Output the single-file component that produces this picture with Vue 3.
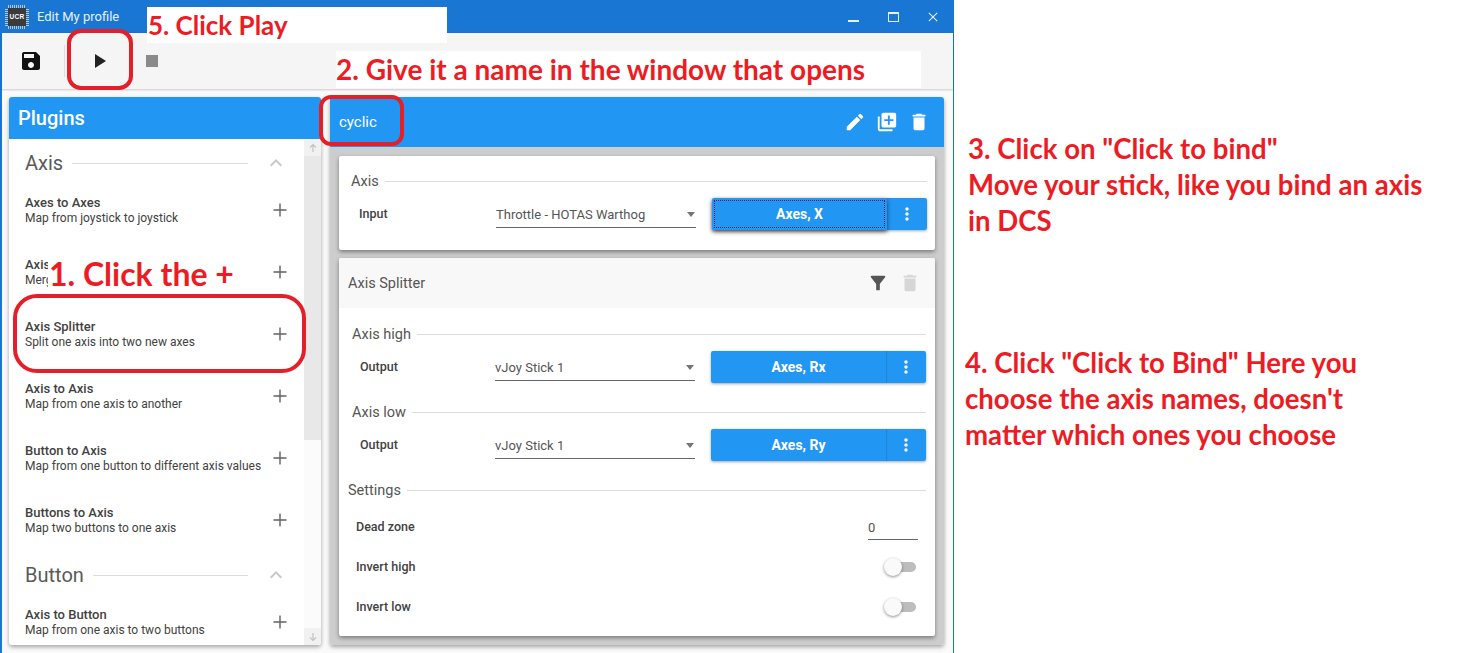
<script setup>
const icons = {
  save: 'M17 3H5c-1.11 0-2 .9-2 2v14c0 1.1.89 2 2 2h14c1.1 0 2-.9 2-2V7l-4-4zm-5 16c-1.66 0-3-1.34-3-3s1.34-3 3-3 3 1.34 3 3-1.34 3-3 3zm3-10H5V5h10v4z',
  play: 'M8 5v14l11-7z',
  stop: 'M6 6h12v12H6z',
  edit: 'M3 17.25V21h3.75L17.81 9.94l-3.75-3.75L3 17.25zM20.71 7.04c.39-.39.39-1.02 0-1.41l-2.34-2.34c-.39-.39-1.02-.39-1.41 0l-1.83 1.83 3.75 3.75 1.83-1.83z',
  copy: 'M4 6H2v14c0 1.1.9 2 2 2h14v-2H4V6zm16-4H8c-1.1 0-2 .9-2 2v12c0 1.1.9 2 2 2h12c1.1 0 2-.9 2-2V4c0-1.1-.9-2-2-2zm-1 9h-4v4h-2v-4H9V9h4V5h2v4h4v2z',
  trash: 'M6 19c0 1.1.9 2 2 2h8c1.1 0 2-.9 2-2V7H6v12zM19 4h-3.5l-1-1h-5l-1 1H5v2h14V4z',
  filter: 'M4.25 5.61C6.27 8.2 10 13 10 13v6c0 .55.45 1 1 1h2c.55 0 1-.45 1-1v-6s3.72-4.8 5.74-7.39c.51-.66.04-1.61-.79-1.61H5.04c-.83 0-1.3.95-.79 1.61z',
  more: 'M12 8c1.1 0 2-.9 2-2s-.9-2-2-2-2 .9-2 2 .9 2 2 2zm0 2c-1.1 0-2 .9-2 2s.9 2 2 2 2-.9 2-2-.9-2-2-2zm0 6c-1.1 0-2 .9-2 2s.9 2 2 2 2-.9 2-2-.9-2-2-2z',
  chevron: 'M12 8l-6 6 1.41 1.41L12 10.83l4.59 4.58L18 14z'
}
const axisPlugins = [
  ['Axes to Axes', 'Map from joystick to joystick'],
  ['Axis Merger', 'Merge two axes into one'],
  ['Axis Splitter', 'Split one axis into two new axes'],
  ['Axis to Axis', 'Map from one axis to another'],
  ['Button to Axis', 'Map from one button to different axis values'],
  ['Buttons to Axis', 'Map two buttons to one axis']
]
const buttonPlugins = [['Axis to Button', 'Map from one axis to two buttons']]
const pluginGroups = [
  { name: 'Axis', items: axisPlugins },
  { name: 'Button', items: buttonPlugins }
]
const outputs = [
  { name: 'Axis high', binding: 'Axes, Rx' },
  { name: 'Axis low', binding: 'Axes, Ry' }
]
</script>

<template>
  <div class="page">
    <div class="window">
      <header class="titlebar">
        <div class="logo">
          <div class="pins"></div>
          <div class="chip">UCR</div>
        </div>
        <span class="title">Edit My profile</span>
        <div class="winctl">
          <span class="minimize"></span>
          <span class="maximize"></span>
          <svg class="close" viewBox="0 0 12 12"><path d="M1 1l10 10M11 1L1 11" /></svg>
        </div>
      </header>

      <div class="toolbar">
        <button class="tool save"><svg viewBox="0 0 24 24"><path :d="icons.save" /></svg></button>
        <span class="divider"></span>
        <button class="tool play"><svg viewBox="0 0 24 24"><path :d="icons.play" /></svg></button>
        <button class="tool stop"><svg viewBox="0 0 24 24"><path :d="icons.stop" /></svg></button>
      </div>

      <main class="main">
        <section class="plugins">
          <h2 class="plugins-head">Plugins</h2>
          <div class="plugins-body">
            <div class="list">
              <template v-for="group in pluginGroups" :key="group.name">
                <div class="group-head">
                  <span class="group-name">{{ group.name }}</span>
                  <span class="rule"></span>
                  <svg class="chev" viewBox="0 0 24 24"><path :d="icons.chevron" /></svg>
                </div>
                <div v-for="p in group.items" :key="p[0]" class="plugin">
                  <div class="plugin-text">
                    <div class="plugin-name">{{ p[0] }}</div>
                    <div class="plugin-desc">{{ p[1] }}</div>
                  </div>
                  <svg class="plus" viewBox="0 0 14 14"><path d="M7 0.5v13M0.5 7h13" /></svg>
                </div>
              </template>
            </div>
            <div class="scrollbar">
              <div class="sb-btn"><svg viewBox="0 0 10 10"><path d="M5 9V1.5M2 4.5l3-3 3 3" /></svg></div>
              <div class="sb-thumb"></div>
              <div class="sb-track"></div>
              <div class="sb-btn"><svg viewBox="0 0 10 10"><path d="M5 1v7.5M2 5.5l3 3 3-3" /></svg></div>
            </div>
          </div>
        </section>

        <section class="profile">
          <header class="profile-head">
            <span class="profile-name">cyclic</span>
            <div class="head-icons">
              <svg viewBox="0 0 24 24"><path :d="icons.edit" /></svg>
              <svg viewBox="0 0 24 24"><path :d="icons.copy" /></svg>
              <svg viewBox="0 0 24 24"><path :d="icons.trash" /></svg>
            </div>
          </header>
          <div class="profile-body">
            <div class="card card-input">
              <div class="heading"><span>Axis</span><i></i></div>
              <div class="io-row">
                <span class="io-label">Input</span>
                <div class="select"><span>Throttle - HOTAS Warthog</span><b></b></div>
                <div class="bind">
                  <button class="bind-main focused">Axes, X</button>
                  <button class="bind-more"><svg viewBox="0 0 24 24"><path :d="icons.more" /></svg></button>
                </div>
              </div>
            </div>

            <div class="card">
              <div class="card-head">
                <span>Axis Splitter</span>
                <div class="card-icons">
                  <svg viewBox="0 0 24 24"><path :d="icons.filter" /></svg>
                  <svg class="dim" viewBox="0 0 24 24"><path :d="icons.trash" /></svg>
                </div>
              </div>
              <div class="card-body">
                <div v-for="o in outputs" :key="o.name" class="output">
                  <div class="heading"><span>{{ o.name }}</span><i></i></div>
                  <div class="io-row">
                    <span class="io-label">Output</span>
                    <div class="select"><span>vJoy Stick 1</span><b></b></div>
                    <div class="bind">
                      <button class="bind-main">{{ o.binding }}</button>
                      <button class="bind-more"><svg viewBox="0 0 24 24"><path :d="icons.more" /></svg></button>
                    </div>
                  </div>
                </div>
                <div class="settings">
                  <div class="heading"><span>Settings</span><i></i></div>
                  <div class="set-row">
                    <span class="io-label">Dead zone</span>
                    <div class="number">0</div>
                  </div>
                  <div class="set-row">
                    <span class="io-label">Invert high</span>
                    <div class="switch"><span class="thumb"></span></div>
                  </div>
                  <div class="set-row">
                    <span class="io-label">Invert low</span>
                    <div class="switch"><span class="thumb"></span></div>
                  </div>
                </div>
              </div>
            </div>
          </div>
        </section>
      </main>
    </div>

    <aside class="notes">
      <p class="note note-3">3. Click on "Click to bind"<br />Move your stick, like you bind an axis<br />in DCS</p>
      <p class="note note-4">4. Click "Click to Bind" Here you<br />choose the axis names, doesn't<br />matter which ones you choose</p>
    </aside>

    <div class="tag tag-5">5. Click Play</div>
    <div class="tag tag-2">2. Give it a name in the window that opens</div>
    <div class="tag tag-1">1. Click the +</div>
    <div class="ring ring-play"></div>
    <div class="ring ring-name"></div>
    <div class="ring ring-splitter"></div>
  </div>
</template>

<style>
html, body { margin: 0; background: #fff; }
</style>

<style scoped>
.page {
  position: relative;
  display: flex;
  width: 1472px;
  height: 653px;
  overflow: hidden;
  background: #fff;
  font-family: Roboto, "Liberation Sans", sans-serif;
  color: #424242;
}
.window {
  width: 954px;
  height: 653px;
  box-sizing: border-box;
  border-left: 2px solid #1976d2;
  border-right: 1px solid #1976d2;
  display: flex;
  flex-direction: column;
  flex: none;
  background: #fafafa;
}
.titlebar {
  height: 33px;
  flex: none;
  background: #1976d2;
  display: flex;
  align-items: center;
  margin-left: -2px;
  margin-right: -1px;
  color: #e3f2fd;
}
.logo {
  position: relative;
  width: 24px;
  height: 24px;
  margin-left: 5px;
  margin-right: 8px;
}
.pins {
  position: absolute;
  inset: 0;
  background:
    repeating-linear-gradient(90deg, #b9c6cf 0 1px, transparent 1px 2px) 3px 0 / 18px 24px no-repeat,
    repeating-linear-gradient(0deg, #b9c6cf 0 1px, transparent 1px 2px) 0 3px / 24px 18px no-repeat;
}
.chip {
  position: absolute;
  left: 3px;
  top: 3px;
  width: 18px;
  height: 18px;
  background: #3a3b3d;
  color: #fff;
  font: 700 6.5px/18px "Liberation Sans", sans-serif;
  text-align: center;
  letter-spacing: 0.3px;
}
.title { font-size: 13px; }
.winctl {
  margin-left: auto;
  width: 120px;
  height: 33px;
  display: flex;
  align-items: center;
  position: relative;
}
.minimize { position: absolute; left: 14px; top: 20px; width: 11px; height: 2px; background: #e3f2fd; }
.maximize { position: absolute; left: 54px; top: 12px; width: 11px; height: 10px; box-sizing: border-box; border: 1.4px solid #e3f2fd; border-top-width: 2px; }
.close { position: absolute; left: 94px; top: 12px; width: 10px; height: 10px; }
.close path { stroke: #e3f2fd; stroke-width: 1.3; fill: none; }

.toolbar {
  height: 56px;
  flex: none;
  background: #f5f5f5;
  display: flex;
  align-items: center;
  box-shadow: 0 1px 2px rgba(0, 0, 0, 0.2);
  position: relative;
}
.tool { border: 0; background: none; padding: 0; width: 24px; height: 24px; display: block; }
.tool svg { display: block; width: 24px; height: 24px; }
.save { margin-left: 17px; }
.save svg { fill: #111; }
.divider { width: 1px; height: 32px; background: #ddd; margin-left: 21px; }
.play { margin-left: 22px; }
.play svg { fill: #222; }
.stop { margin-left: 29px; }
.stop svg { fill: #8a8a8a; }

.main {
  flex: 1;
  min-height: 0;
  display: flex;
  gap: 9px;
  padding: 8px 0 8px 7px;
}
.plugins {
  width: 312px;
  height: 548px;
  flex: none;
  background: #fff;
  border-radius: 3px;
  box-shadow: 0 2px 4px rgba(0, 0, 0, 0.35);
  display: flex;
  flex-direction: column;
  overflow: hidden;
}
.plugins-head {
  margin: 0;
  height: 42px;
  flex: none;
  background: #2196f3;
  color: #fff;
  font-size: 20px;
  font-weight: 500;
  line-height: 42px;
  padding-left: 9px;
}
.plugins-body { flex: 1; min-height: 0; display: flex; }
.list { flex: 1; min-width: 0; overflow: hidden; }
.group-head {
  height: 40px;
  box-sizing: border-box;
  padding: 12px 16px 0 16px;
  display: flex;
  align-items: flex-start;
}
.group-name { font-size: 20px; line-height: 24px; color: #5a5a5a; }
.rule { flex: 1; height: 1px; background: #ddd; margin: 12px 0 0 9px; }
.chev { width: 24px; height: 24px; margin-left: 16px; fill: #c8c8c8; flex: none; }
.plugin {
  height: 62px;
  display: flex;
  align-items: center;
  padding: 0 17px 0 16px;
}
.plugin-text { flex: 1; min-width: 0; }
.plugin-name { font-size: 13px; font-weight: 500; line-height: 16px; color: #424242; white-space: nowrap; }
.plugin-desc { font-size: 12px; line-height: 15px; color: #424242; white-space: nowrap; }
.plus { width: 14px; height: 14px; flex: none; }
.plus path { stroke: #616161; stroke-width: 1.4; fill: none; }
.scrollbar { width: 17px; flex: none; display: flex; flex-direction: column; background: #fbfbfb; }
.sb-btn { height: 17px; flex: none; background: #f1f1f1; display: flex; align-items: center; justify-content: center; }
.sb-btn svg { width: 10px; height: 10px; }
.sb-btn path { stroke: #c4c4c4; stroke-width: 1.2; fill: none; }
.sb-thumb { height: 284px; flex: none; background: #e8e8e8; }
.sb-track { flex: 1; }

.profile {
  width: 614px;
  height: 548px;
  flex: none;
  display: flex;
  flex-direction: column;
  border-radius: 3px;
  box-shadow: 0 2px 4px rgba(0, 0, 0, 0.35);
  overflow: hidden;
}
.profile-head {
  height: 50px;
  flex: none;
  background: #2196f3;
  display: flex;
  align-items: center;
  color: #fff;
  padding: 0 14px 0 9px;
}
.profile-name { font-size: 15px; }
.head-icons { margin-left: auto; display: flex; gap: 10px; }
.head-icons svg { width: 22px; height: 22px; fill: #fff; display: block; }
.profile-body {
  flex: 1;
  background: #cdcdcd;
  padding: 9px;
  display: flex;
  flex-direction: column;
  gap: 8px;
}
.card {
  background: #fff;
  border-radius: 2px;
  box-shadow: 0 2px 4px rgba(0, 0, 0, 0.4);
}
.card-input { padding: 15px 8px 20px 12px; }
.heading { display: flex; align-items: center; height: 20px; }
.heading span { font-size: 14.5px; color: #555; font-weight: 400; }
.heading i { flex: 1; height: 1px; background: #dcdcdc; margin-left: 6px; }
.io-row { display: flex; align-items: center; height: 32px; margin-top: 7px; }
.io-label { font-size: 12.5px; font-weight: 500; color: #424242; margin-top: -2px; }
.io-row .io-label { padding-left: 8px; width: 137px; box-sizing: border-box; flex: none; width: 145px; }
.select {
  width: 200px;
  height: 27px;
  margin-top: 1px;
  box-sizing: border-box;
  border-bottom: 1px solid #666;
  display: flex;
  align-items: center;
  justify-content: space-between;
  font-size: 13px;
  color: #555;
}
.select b { border: 4px solid transparent; border-top: 5px solid #757575; border-bottom: 0; margin-right: 1px; }
.bind { margin-left: 16px; display: flex; height: 32px; border-radius: 2px; box-shadow: 0 1px 3px rgba(0, 0, 0, 0.35); }
.bind-main {
  width: 175px;
  border: 0;
  background: #2196f3;
  color: #fff;
  font: 700 14px Roboto, sans-serif;
  border-radius: 2px 0 0 2px;
  box-shadow: 1px 0 1px rgba(0, 0, 0, 0.12);
  padding: 0;
  position: relative;
}
.bind-main.focused {
  outline: 1px dotted #0d2f57;
  outline-offset: -3px;
  box-shadow: 0 2px 4px rgba(0, 0, 0, 0.6);
}
.bind-more {
  width: 40px;
  border: 0;
  padding: 0;
  background: #2196f3;
  border-radius: 0 2px 2px 0;
  display: flex;
  align-items: center;
  justify-content: center;
}
.bind-more svg { width: 20px; height: 20px; fill: #fff; }
.card-head {
  height: 50px;
  background: #f8f8f8;
  display: flex;
  align-items: center;
  padding: 0 14px 0 9px;
  font-size: 14.5px;
  color: #555;
  border-radius: 2px 2px 0 0;
}
.card-icons { margin-left: auto; display: flex; gap: 10px; }
.card-icons svg { width: 22px; height: 22px; fill: #555; display: block; }
.card-icons svg.dim { fill: #d6d6d6; }
.card-body { padding: 16px 9px 9px 9px; }
.output { padding-left: 4px; margin-bottom: 19px; }
.output .io-row .io-label { width: 143px; }
.settings .heading { margin-bottom: 7px; }
.set-row { height: 40px; display: flex; align-items: center; justify-content: space-between; padding: 0 10px 0 8px; }
.number {
  width: 50px;
  height: 25px;
  box-sizing: border-box;
  border-bottom: 1px solid #666;
  font-size: 13px;
  line-height: 25px;
  color: #555;
  margin: 1px -2px 0 0;
}
.switch { position: relative; width: 32px; height: 20px; }
.switch::before {
  content: "";
  position: absolute;
  left: 8px;
  right: 0;
  top: 5px;
  height: 10px;
  border-radius: 5px;
  background: #bdbdbd;
}
.thumb {
  position: absolute;
  left: 0;
  top: 1px;
  width: 18px;
  height: 18px;
  border-radius: 50%;
  background: #fafafa;
  box-shadow: 0 1px 3px rgba(0, 0, 0, 0.45);
}

.notes { flex: 1; position: relative; }
.note {
  margin: 0;
  font: 700 27.6px/36px Lato, "Open Sans", sans-serif;
  color: #ed1c24;
  white-space: nowrap;
}
.note-3 { padding: 131px 0 0 14px; }
.note-4 { padding: 106px 0 0 11px; }

.tag {
  position: absolute;
  background: #fff;
  color: #ed1c24;
  font: 700 26px/36px Lato, "Open Sans", sans-serif;
  white-space: nowrap;
}
.tag-5 { left: 147px; top: 7px; width: 300px; height: 36px; padding-left: 1px; box-sizing: border-box; }
.tag-2 { left: 336px; top: 51px; width: 585px; height: 37px; font-size: 28px; }
.tag-1 { left: 48px; top: 257px; width: 192px; height: 33px; font-size: 32px; line-height: 34px; padding-left: 1px; box-sizing: border-box; }
.ring {
  position: absolute;
  box-sizing: border-box;
  border: 4px solid #e3202a;
}
.ring-play { left: 67px; top: 29px; width: 66px; height: 61px; border-radius: 14px; }
.ring-name { left: 319px; top: 95px; width: 85px; height: 51px; border-radius: 12px; }
.ring-splitter { left: 13px; top: 294px; width: 293px; height: 79px; border-radius: 24px; }
</style>
